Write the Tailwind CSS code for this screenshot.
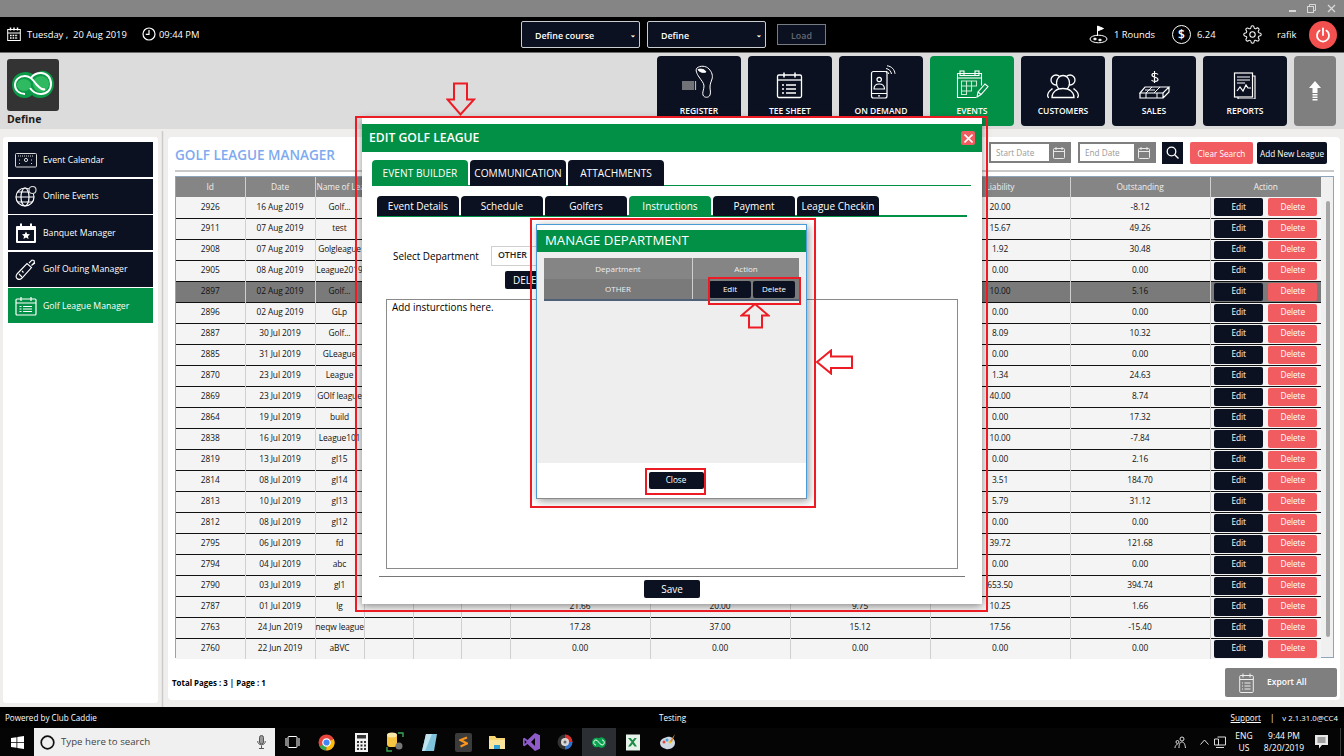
<!doctype html>
<html>
  <head>
    <meta charset="utf-8" />
    <script src="https://cdn.jsdelivr.net/npm/@tailwindcss/browser@4"></script>
  </head>
  <body class="bg-black">
    <div class="relative w-[1344px] h-[756px] overflow-hidden flex flex-col font-['Open_Sans',sans-serif] text-black">
      <!-- window title bar -->
      <div class="h-[17px] bg-[#858585] flex items-center justify-end gap-[11px] pr-[8px] shrink-0">
        <div class="w-[7px] h-[2px] bg-[#d8d8d8] mt-[4px]"></div>
        <svg class="w-[9px] h-[9px]" viewBox="0 0 9 9" fill="none" stroke="#d8d8d8"><rect x="0.5" y="2.5" width="6" height="6" /><path d="M2.5 2.5v-2h6v6h-2" /></svg>
        <svg class="w-[9px] h-[9px]" viewBox="0 0 9 9" fill="none" stroke="#d8d8d8" stroke-width="1.3"><path d="M1 1l7 7M8 1l-7 7" /></svg>
      </div>

      <!-- top black header -->
      <div class="h-[36px] bg-black border-b border-[#6b6b6b] flex items-center text-white text-[9.4px] shrink-0">
        <div class="w-[521px] flex items-center pl-[7px]">
          <svg class="w-[14px] h-[14px]" viewBox="0 0 14 14" fill="none" stroke="#fff"><rect x="0.7" y="2.5" width="12.6" height="11" /><path d="M0.7 6h12.6" /><path d="M3.5 0.5v3M7 0.5v3M10.5 0.5v3" stroke-width="1.5" /><path d="M3 8.5h8M3 11h8" stroke-width="1.4" stroke-dasharray="1.6 1" /></svg>
          <span class="ml-[6px] w-[115px] whitespace-pre pt-[2px]">Tuesday ,  20 Aug 2019</span>
          <svg class="w-[14px] h-[14px]" viewBox="0 0 14 14" fill="none" stroke="#fff" stroke-width="1.2"><circle cx="7" cy="7" r="6" /><path d="M7 3v4.3H3.8" /></svg>
          <span class="ml-[3px] pt-[2px]">09:44 PM</span>
        </div>
        <div class="w-[119px] h-[27px] bg-[#0b1120] border border-[#c9ccd1] rounded-[2px] flex items-center pl-[13px] pt-[2px] text-[8.9px] font-semibold relative">Define course<span class="absolute right-[3px] top-[8px] text-[7px]">⌄</span></div>
        <div class="ml-[7px] w-[119px] h-[27px] bg-[#0b1120] border border-[#c9ccd1] rounded-[2px] flex items-center pl-[13px] pt-[2px] text-[8.9px] font-semibold relative">Define<span class="absolute right-[3px] top-[8px] text-[7px]">⌄</span></div>
        <div class="ml-[11px] w-[49px] h-[21px] bg-[#0b1120] border border-[#777b82] flex items-center justify-center pt-[2px] text-[8.9px] font-semibold text-[#666a70]">Load</div>
        <div class="ml-auto flex items-center">
          <svg class="w-[19px] h-[19px]" viewBox="0 0 19 19" fill="none" stroke="#fff"><path d="M8.5 11V1l6 2.5-6 2.5" fill="#fff" /><ellipse cx="9.5" cy="14" rx="8.5" ry="3.8" /><ellipse cx="6" cy="14" rx="1.4" ry="0.8" fill="#fff" /><ellipse cx="11" cy="15" rx="1.4" ry="0.8" fill="#fff" /></svg>
          <span class="ml-[6px] w-[40px] whitespace-nowrap pt-[2px]">1 Rounds</span>
          <div class="ml-[18px] w-[19px] h-[19px] rounded-full border-[1.300px] border-white flex items-center justify-center text-[12px] leading-none font-semibold">$</div>
          <span class="ml-[6px] w-[18px] pt-[2px]">6.24</span>
          <svg class="ml-[28px] w-[19px] h-[19px]" viewBox="0 0 24 24" fill="none" stroke="#fff" stroke-width="1.3"><circle cx="12" cy="12" r="3.4" /><path d="M19.4 15a1.65 1.65 0 0 0 .33 1.82l.06.06a2 2 0 0 1 0 2.83 2 2 0 0 1-2.83 0l-.06-.06a1.65 1.65 0 0 0-1.82-.33 1.65 1.65 0 0 0-1 1.51V21a2 2 0 0 1-2 2 2 2 0 0 1-2-2v-.09A1.65 1.65 0 0 0 9 19.4a1.65 1.65 0 0 0-1.82.33l-.06.06a2 2 0 0 1-2.83 0 2 2 0 0 1 0-2.83l.06-.06a1.65 1.65 0 0 0 .33-1.82 1.65 1.65 0 0 0-1.51-1H3a2 2 0 0 1-2-2 2 2 0 0 1 2-2h.09A1.65 1.65 0 0 0 4.6 9a1.65 1.65 0 0 0-.33-1.82l-.06-.06a2 2 0 0 1 0-2.83 2 2 0 0 1 2.83 0l.06.06a1.65 1.65 0 0 0 1.82.33H9a1.65 1.65 0 0 0 1-1.51V3a2 2 0 0 1 2-2 2 2 0 0 1 2 2v.09a1.65 1.65 0 0 0 1 1.51 1.65 1.65 0 0 0 1.82-.33l.06-.06a2 2 0 0 1 2.83 0 2 2 0 0 1 0 2.83l-.06.06a1.65 1.65 0 0 0-.33 1.82V9a1.65 1.65 0 0 0 1.51 1H21a2 2 0 0 1 2 2 2 2 0 0 1-2 2h-.09a1.65 1.65 0 0 0-1.51 1z" /></svg>
          <span class="ml-[15px] w-[18px] pt-[2px]">rafik</span>
          <div class="ml-[14px] mr-[7px] w-[28px] h-[28px] rounded-full bg-[#f2504f] flex items-center justify-center">
            <svg class="w-[16px] h-[16px]" viewBox="0 0 16 16" fill="none" stroke="#fff" stroke-width="1.8" stroke-linecap="round"><path d="M8 1.5v6.5" /><path d="M4.6 3.6a6 6 0 1 0 6.8 0" /></svg>
          </div>
        </div>
      </div>

      <!-- logo and module tiles -->
      <div class="h-[76px] bg-[#dcdcdc] flex shrink-0">
        <div class="pl-[7px] pt-[6px]">
          <div class="w-[52px] h-[52px] rounded-[3px] bg-[#333333] flex items-center justify-center">
            <svg class="w-[44px] h-[34px]" viewBox="0 0 44 34" fill="none"><path d="M15 4c5 0 7 3 9 3 3-3 6-5 9-4 6 1 10 6 10 13 0 8-6 14-14 14-4 0-6-1-8-3-2 2-4 3-7 3C6 30 1 24 1 17 1 9 7 4 15 4z" fill="#0a9a48" /><circle cx="30" cy="16" r="8" fill="#2fba62" /><ellipse cx="13" cy="17" rx="7" ry="6" fill="#2fba62" /><path d="M14 26c-6 0-10-4-10-9s4-9 10-9c6 0 9 5 11 8l3 3c2 2 4 3 6 2" stroke="#fff" stroke-width="2" /><path d="M20 10c2-3 6-5 10-5 6 0 10 5 10 11s-4 10-10 10c-6 0-9-3-11-6" stroke="#fff" stroke-width="2" /></svg>
          </div>
          <div class="text-[10.5px] leading-[14px] font-bold text-[#1a1a1a] mt-[1px]">Define</div>
        </div>
        <div class="ml-auto flex gap-[7px] pt-[3px] pr-[8px] text-white text-[8.5px] font-semibold">
          <div class="w-[84px] h-[70px] rounded-[4px] bg-[#0b1120] flex flex-col items-center">
            <svg class="w-[40px] h-[34px] mt-[9px]" viewBox="0 0 40 34" fill="none" stroke="#fff"><path d="M4 16v9M6 16v9M8 16v9M10 16v9M12 16v9M14 16v9M16.500 16v9" stroke="#b5b5b5" stroke-width="1.2" /><path d="M18 3c3-2.500 9-2.500 12 1 3 3 4 7 3 10-1 3-2 5-2 8 0 3 1 5 0 8-1 3-6 3-7 0-1-2 1-6 1-9 0-3-3-6-5-9-2-3-4-7-2-9z" /><path d="M19 4.500c3-1 7 0 8 2.500-3 1-7 0-8-2.500z" fill="#fff" /></svg>
            <span class="mt-[6px] leading-[12px]">REGISTER</span>
          </div>
          <div class="w-[84px] h-[70px] rounded-[4px] bg-[#0b1120] flex flex-col items-center">
            <svg class="w-[40px] h-[34px] mt-[9px]" viewBox="0 0 40 34" fill="none" stroke="#fff" stroke-width="1.3"><rect x="7.500" y="10" width="24" height="22.500" rx="1.500" /><path d="M7.500 15h24" /><path d="M14 7.500v5M25 7.500v5" stroke-width="1.500" /><path d="M16 20h10M16 24h10M16 28h10M12 20h2M12 24h2M12 28h2" stroke-width="1.500" /></svg>
            <span class="mt-[6px] leading-[12px]">TEE SHEET</span>
          </div>
          <div class="w-[84px] h-[70px] rounded-[4px] bg-[#0b1120] flex flex-col items-center">
            <svg class="w-[40px] h-[34px] mt-[9px]" viewBox="0 0 40 34" fill="none" stroke="#fff" stroke-width="1.200"><rect x="10.500" y="6.500" width="15.500" height="26.500" rx="2" /><path d="M10.500 28.500h15.500M17 30.800h2" /><circle cx="18.200" cy="14.500" r="2.200" /><path d="M13 24c0-3 2-5 5.200-5s5.300 2 5.300 5z" /><path d="M25 3.500c3 .5 5 2.500 5.500 5.500M26 0.800c4.500 .5 7.500 3.500 8 8M25 6.300c1.500 .3 2.500 1.200 2.800 2.700" stroke-width="1" /></svg>
            <span class="mt-[6px] leading-[12px]">ON DEMAND</span>
          </div>
          <div class="w-[84px] h-[70px] rounded-[4px] bg-[#029047] flex flex-col items-center">
            <svg class="w-[40px] h-[34px] mt-[9px]" viewBox="0 0 40 34" fill="none" stroke="#fff" stroke-width="1.100"><path d="M24 32.500H5.500V8.500h24v12" /><path d="M5.500 13h24" /><rect x="8" y="6" width="4" height="4.500" /><rect x="23" y="6" width="4" height="4.500" /><path d="M12 10.500h11" /><path d="M9.500 16h15v5h-5v5h-5v3.500h-5zM9.500 21h10M9.500 26h5M14.500 16v13M19.500 16v10" stroke="#c6ecd4" /><path d="M25 32l1-5 7-8 3 2.500-7 8z" /><path d="M26 27l3 2.500" /></svg>
            <span class="mt-[6px] leading-[12px]">EVENTS</span>
          </div>
          <div class="w-[84px] h-[70px] rounded-[4px] bg-[#0b1120] flex flex-col items-center">
            <svg class="w-[40px] h-[34px] mt-[9px]" viewBox="0 0 40 34" fill="none" stroke="#fff" stroke-width="1.300"><circle cx="13" cy="15" r="5" /><circle cx="27" cy="15" r="5" /><path d="M6 32.500c-2 0-1.500-3-.5-5 1-2 3-3 4-4M34 32.500c2 0 1.500-3 .5-5-1-2-3-3-4-4" /><ellipse cx="20" cy="18" rx="6.500" ry="7.500" fill="#0b1120" /><path d="M9 32.500c0-5 4-9 11-9s11 4 11 9z" fill="#0b1120" /></svg>
            <span class="mt-[6px] leading-[12px]">CUSTOMERS</span>
          </div>
          <div class="w-[84px] h-[70px] rounded-[4px] bg-[#0b1120] flex flex-col items-center">
            <svg class="w-[40px] h-[34px] mt-[9px]" viewBox="0 0 40 34" fill="none" stroke="#fff" stroke-width="1.200"><path d="M24 9.500c-1-1.500-6-2-6 .5 0 3 6 1.500 6 4.500 0 2.500-5 2.500-6.500 .5M20.500 6v12" /><path d="M11 22h24l-6 6H6zM6 28v5h23v-5M29 33l6-6v-5" /><path d="M11 25h10M18 22l-6 6M26 22l-6 6M12 28v5M23 28v5" stroke-width="1" /></svg>
            <span class="mt-[6px] leading-[12px]">SALES</span>
          </div>
          <div class="w-[84px] h-[70px] rounded-[4px] bg-[#0b1120] flex flex-col items-center">
            <svg class="w-[40px] h-[34px] mt-[9px]" viewBox="0 0 40 34" fill="none" stroke="#fff" stroke-width="1.200"><rect x="9.500" y="8" width="18" height="24" /><path d="M27.500 11h2.500v23H13v-2" /><path d="M12 12h13M12 15h13M12 18h8" stroke-width="1" /><path d="M12 26l3-4 3 4 3-6 2 3h3" /></svg>
            <span class="mt-[6px] leading-[12px]">REPORTS</span>
          </div>
          <div class="w-[42px] h-[70px] rounded-[4px] bg-[#7f7f7f] flex items-center justify-center">
            <svg class="w-[12px] h-[20px]" viewBox="0 0 12 20" fill="#fff"><path d="M6 0l6 7H8.500v5h-5V7H0z" /><path d="M3.500 13h5v1.500h-5zM3.500 15.500h5V17h-5zM3.500 18h5v1.500h-5z" /></svg>
          </div>
        </div>
      </div>

      <!-- content -->
      <div class="h-[578px] bg-[#efeeec] flex shrink-0">
        <div class="ml-[3px] mt-[8px] mb-[4px] w-[155px] bg-white rounded-[3px] px-[5px] pt-[5px] flex flex-col gap-[1.500px] text-white text-[8.700px] font-medium shrink-0">
          <div class="h-[35px] bg-[#0b1120] flex items-center pl-[7px]">
            <svg class="w-[22px] h-[16px] mr-[6px]" viewBox="0 0 22 16" fill="none" stroke="#d8d8d8"><rect x="0.500" y="1.500" width="21" height="13.500" rx="1" /><path d="M3 4h16M4 8h2M9 8h1M16 8h2M4 11.500h2M16 11.500h2" stroke-dasharray="1 1" /><circle cx="11" cy="8" r="1.600" /></svg>
            <span class="pt-[2px]">Event Calendar</span>
          </div>
          <div class="h-[35px] bg-[#0b1120] flex items-center pl-[7px]">
            <svg class="w-[22px] h-[21px] mr-[6px]" viewBox="0 0 22 21" fill="none" stroke="#fff" stroke-width="1.200"><circle cx="10" cy="11" r="9" /><ellipse cx="10" cy="11" rx="4" ry="9" /><path d="M1 11h18M2.500 6h15M2.500 16h15" /><circle cx="17.500" cy="4" r="3.500" fill="#0b1120" stroke="#d0d0d0" /></svg>
            <span class="pt-[2px]">Online Events</span>
          </div>
          <div class="h-[35px] bg-[#0b1120] flex items-center pl-[7px]">
            <svg class="w-[22px] h-[20px] mr-[6px]" viewBox="0 0 22 20" fill="#fff"><path d="M2 3h18a1 1 0 0 1 1 1v15a1 1 0 0 1-1 1H2a1 1 0 0 1-1-1V4a1 1 0 0 1 1-1zM3 7v11h16V7z" fill-rule="evenodd" /><rect x="5" y="0.500" width="2" height="4" /><rect x="15" y="0.500" width="2" height="4" /><path d="M11 8.500l1.200 2.500 2.800.3-2 1.900.5 2.800-2.500-1.400-2.500 1.400.5-2.800-2-1.900 2.800-.3z" /></svg>
            <span class="pt-[2px]">Banquet Manager</span>
          </div>
          <div class="h-[35px] bg-[#0b1120] flex items-center pl-[7px]">
            <svg class="w-[22px] h-[21px] mr-[6px]" viewBox="0 0 22 21" fill="none" stroke="#fff" stroke-width="1.100"><path d="M2 15L12 4.500l4.500 4L7 19c-2 2-4 1.500-5 .5-1-1-1-3 0-4.500z" /><path d="M4 15l3 3M7 12l1.500 1.500" /><path d="M14 4l3-3 2 .5.500 2-3 3M17 6l3-2" /></svg>
            <span class="pt-[2px]">Golf Outing Manager</span>
          </div>
          <div class="h-[35px] bg-[#029047] flex items-center pl-[7px]">
            <svg class="w-[22px] h-[20px] mr-[6px]" viewBox="0 0 22 20" fill="none" stroke="#fff" stroke-width="1.200"><rect x="1" y="3" width="20" height="16" rx="1" /><path d="M1 7h20M6 1v4M16 1v4" /><path d="M8 10.500h9M8 13h9M8 15.500h9M4.500 10.500h2M4.500 13h2M4.500 15.500h2" /></svg>
            <span class="pt-[2px]">Golf League Manager</span>
          </div>
        </div>
        <div class="ml-[3px] mt-[2px] w-[3px] h-[576px] bg-[#c9c9c9] border-x border-[#e6e6e6] shrink-0"></div>
        <div class="ml-[4px] mt-[8px] mb-[7px] w-[1172px] bg-white rounded-[4px] pl-[7px] pr-[6px] flex flex-col shrink-0">
          <div class="h-[35px] border-b-2 border-[#c9c9c9] flex items-center shrink-0">
            <span class="text-[13.500px] leading-[16px] font-semibold text-[#7eaaf0] mt-[2px]">GOLF LEAGUE MANAGER</span>
            <div class="ml-auto flex items-center pr-[7px] text-[8.200px] mb-[2px]">
              <div class="w-[82px] h-[21px] border-2 border-[#7f7f7f] flex items-center text-[#9a9a9a]">
                <span class="pl-[5px] pt-[2px] flex-1">Start Date</span>
                <div class="w-[20px] h-full bg-[#7f7f7f] flex items-center justify-center"><svg class="w-[12px] h-[12px]" viewBox="0 0 12 12" fill="none" stroke="#e8e8e8"><rect x="0.500" y="1.500" width="11" height="10" rx="1" /><path d="M0.500 4.500h11M3 0v3M9 0v3" /></svg></div>
              </div>
              <div class="ml-[7px] w-[78px] h-[21px] border-2 border-[#7f7f7f] flex items-center text-[#9a9a9a]">
                <span class="pl-[5px] pt-[2px] flex-1">End Date</span>
                <div class="w-[20px] h-full bg-[#7f7f7f] flex items-center justify-center"><svg class="w-[12px] h-[12px]" viewBox="0 0 12 12" fill="none" stroke="#e8e8e8"><rect x="0.500" y="1.500" width="11" height="10" rx="1" /><path d="M0.500 4.500h11M3 0v3M9 0v3" /></svg></div>
              </div>
              <div class="ml-[6px] w-[21px] h-[22px] bg-[#0b1120] flex items-center justify-center"><svg class="w-[13px] h-[13px]" viewBox="0 0 13 13" fill="none" stroke="#fff" stroke-width="1.300"><circle cx="5.500" cy="5.500" r="4.300" /><path d="M8.700 8.700L12.500 12.500" /></svg></div>
              <div class="ml-[7px] w-[63px] h-[22px] pt-[3px] bg-[#f05c5f] rounded-[2px] flex items-center justify-center text-white">Clear Search</div>
              <div class="ml-[4px] w-[70px] h-[22px] pt-[3px] bg-[#0b1120] rounded-[2px] flex items-center justify-center text-white whitespace-nowrap">Add New League</div>
            </div>
          </div>
          <div class="mt-[4px] h-[482px] border border-[#8ea4bb] flex shrink-0">
            <div class="w-[1145px] shrink-0">
              <table class="table-fixed w-[1145px] text-[8.400px] tracking-[-0.1px] text-center text-[#111]">
                <colgroup>
                  <col class="w-[69px]" /><col class="w-[70px]" /><col class="w-[49px]" /><col class="w-[49px]" /><col class="w-[48px]" /><col class="w-[49px]" /><col class="w-[140px]" /><col class="w-[140px]" /><col class="w-[140px]" /><col class="w-[140px]" /><col class="w-[140px]" /><col class="w-[111px]" />
                </colgroup>
                <thead>
                  <tr class="bg-[#858585] text-[#eeeeee] h-[20px]">
                    <th class="font-normal border-r border-[#cfcfcf]">Id</th>
                    <th class="font-normal border-r border-[#cfcfcf]">Date</th>
                    <th class="font-normal border-r border-[#cfcfcf] text-left pl-[1px] whitespace-nowrap">Name of League</th>
                    <th class="border-r border-[#cfcfcf]"></th>
                    <th class="border-r border-[#cfcfcf]"></th>
                    <th class="border-r border-[#cfcfcf]"></th>
                    <th class="border-r border-[#cfcfcf]"></th>
                    <th class="border-r border-[#cfcfcf]"></th>
                    <th class="border-r border-[#cfcfcf]"></th>
                    <th class="font-normal border-r border-[#cfcfcf]">Liability</th>
                    <th class="font-normal border-r border-[#cfcfcf]">Outstanding</th>
                    <th class="font-normal">Action</th>
                  </tr>
                </thead>
                <tbody id="rows"></tbody>
              </table>
            </div>
            <div class="flex-1 bg-[#f0f0f0] relative">
              <div class="absolute left-[5px] top-[24px] bottom-[20px] w-[4px] rounded-full bg-[#a6a6a6]"></div>
            </div>
          </div>
          <div class="flex-1 flex items-center justify-between">
            <span class="text-[7.900px] font-bold -ml-[3px] mt-[10px]">Total Pages : 3 | Page : 1</span>
            <div class="-mr-[3px] mt-[7px] w-[112px] h-[29px] rounded-[2px] bg-[#7f7f7f] flex items-center text-white text-[8.500px] font-semibold">
              <svg class="ml-[14px] w-[15px] h-[20px]" viewBox="0 0 15 20" fill="none" stroke="#eee"><rect x="0.700" y="2.500" width="13.600" height="17" rx="1" /><path d="M0.700 6.500h13.600M4 0.500v4M11 0.500v4M5.500 10h6M5.500 13h6M5.500 16h6M3 10h1M3 13h1M3 16h1" /></svg>
              <span class="ml-[13px]">Export All</span>
            </div>
          </div>
        </div>
      </div>

      <!-- status strip -->
      <div class="h-[21px] pt-[2px] bg-black text-white text-[8.100px] flex items-center shrink-0">
        <span class="ml-[5px] w-[654px]">Powered by Club Caddie</span>
        <span>Testing</span>
        <span class="ml-auto underline">Support</span>
        <span class="ml-[9px]">|</span>
        <span class="ml-[8px] mr-[6px] text-[7.800px]">v 2.1.31.0@CC4</span>
      </div>

      <!-- windows taskbar -->
      <div class="h-[28px] bg-[#050505] flex items-stretch shrink-0 relative">
        <div class="w-[34px] flex items-center justify-center">
          <svg class="w-[13px] h-[13px]" viewBox="0 0 13 13" fill="#fff"><path d="M0 2l5.500-.8V6H0zM6.300 1.100L13 0v6H6.300zM0 6.800h5.500v4.900L0 11zM6.300 6.800H13V13l-6.700-1z" /></svg>
        </div>
        <div class="w-[241px] bg-[#f0f0f0] flex items-center pl-[6px] text-[9.700px] text-[#444]">
          <svg class="w-[15px] h-[15px]" viewBox="0 0 15 15" fill="none" stroke="#111" stroke-width="1.700"><circle cx="7.500" cy="7.500" r="6.300" /></svg>
          <span class="ml-[6px]">Type here to search</span>
          <svg class="ml-auto mr-[9px] w-[9px] h-[14px]" viewBox="0 0 9 14" fill="none" stroke="#555"><rect x="2.500" y="0.500" width="4" height="8.500" rx="2" fill="#999" /><path d="M0.700 6c0 5 7.600 5 7.600 0M4.500 10.500V13M2 13.500h5" /></svg>
        </div>
        <div class="w-[34px] flex items-center justify-center">
          <svg class="w-[15px] h-[12px]" viewBox="0 0 15 12" fill="none" stroke="#fff"><rect x="3" y="0.500" width="9" height="11" rx="1" /><path d="M1 2v8M14 2v8" /></svg>
        </div>
        <div class="w-[35px] flex items-center justify-center">
          <svg class="w-[17px] h-[17px]" viewBox="0 0 17 17"><circle cx="8.500" cy="8.500" r="8" fill="#e8453c" /><path d="M8.500 8.500L1.600 12.500A8 8 0 0 0 8.500 16.500z" fill="#34a853" /><path d="M8.500 8.500L8.500 16.500A8 8 0 0 0 15.800 5z" fill="#fbbc05" /><circle cx="8.500" cy="8.500" r="3.700" fill="#4285f4" stroke="#fff" stroke-width="1.200" /></svg>
        </div>
        <div class="w-[34px] flex items-center justify-center">
          <svg class="w-[13px] h-[19px]" viewBox="0 0 13 19"><rect width="13" height="19" fill="#f2f2f2" /><rect x="2" y="2" width="9" height="3.500" fill="#333" /><path d="M2 8h2v2H2zM5.500 8h2v2h-2zM9 8h2v2H9zM2 11.500h2v2H2zM5.500 11.500h2v2h-2zM9 11.500h2v2H9zM2 15h2v2H2zM5.500 15h2v2h-2zM9 15h2v2H9z" fill="#333" /></svg>
        </div>
        <div class="w-[34px] flex items-center justify-center">
          <svg class="w-[18px] h-[20px]" viewBox="0 0 18 20"><rect x="1" y="1" width="10" height="14" rx="3" fill="#f5c542" /><ellipse cx="6" cy="3" rx="5" ry="2.500" fill="#f9e7a8" /><path d="M12 1h5v4M1 15v4h5" fill="none" stroke="#3aa655" stroke-width="1.400" /><circle cx="13" cy="14" r="3.500" fill="#777" /></svg>
        </div>
        <div class="w-[34px] flex items-center justify-center">
          <svg class="w-[15px] h-[19px]" viewBox="0 0 15 19"><path d="M4 1h11l-3 17H0z" fill="#7fc4dc" /><path d="M4 1h6L3 18H0z" fill="#bfe4ef" /></svg>
        </div>
        <div class="w-[34px] flex items-center justify-center">
          <div class="w-[17px] h-[19px] bg-[#3b3b3b] rounded-[2px] flex items-center justify-center">
            <svg class="w-[9px] h-[12px]" viewBox="0 0 9 12" fill="none" stroke="#f7941e" stroke-width="2.200"><path d="M8 1.500L1.500 4 8 7.500 1.500 10.500" /></svg>
          </div>
        </div>
        <div class="w-[34px] flex items-center justify-center">
          <svg class="w-[16px] h-[14px]" viewBox="0 0 16 14"><path d="M0 1h6l1.500 2H16v11H0z" fill="#f7d774" /><rect x="0" y="5" width="16" height="9" fill="#fbe59c" /><rect x="5" y="10" width="6" height="4" fill="#2f9fd8" /></svg>
        </div>
        <div class="w-[34px] flex items-center justify-center">
          <svg class="w-[17px] h-[18px]" viewBox="0 0 17 18" fill="#8e5bc9"><path d="M12 0l5 2.200v13.600L12 18 4.500 11 1.500 13.300 0 12.500V5.500l1.500-.8 3 2.300zM12 5l-4 4 4 4zM1.700 7v4l2-2z" fill-rule="evenodd" /></svg>
        </div>
        <div class="w-[34px] flex items-center justify-center">
          <svg class="w-[16px] h-[16px]" viewBox="0 0 16 16"><circle cx="8" cy="8" r="7.500" fill="#333" /><path d="M8 .5A7.500 7.500 0 0 1 15.500 8H8z" fill="#d7322e" /><path d="M15.500 8A7.500 7.500 0 0 1 8 15.500V8z" fill="#2f6fd0" /><circle cx="8" cy="8" r="4" fill="#d8d8d8" /><circle cx="8" cy="8" r="1.500" fill="#666" /></svg>
        </div>
        <div class="w-[34px] bg-[#2b2f33] flex items-center justify-center">
          <svg class="w-[14px] h-[11px]" viewBox="0 0 14 11" fill="#0aa350"><ellipse cx="4.500" cy="5.500" rx="4.500" ry="4.800" /><ellipse cx="9.500" cy="5.500" rx="4.500" ry="5.200" /><path d="M4 8c-3 0-3-5 0-5 2 0 3 4 6 5 3 0 3-5 0-5" fill="none" stroke="#fff" /></svg>
        </div>
        <div class="w-[34px] flex items-center justify-center">
          <svg class="w-[16px] h-[17px]" viewBox="0 0 16 17"><rect x="1" y="0.500" width="14" height="16" fill="#e7f3ea" /><path d="M3 4l3.500 4L3 12.500h2.500L7.600 10l2 2.500H12L8.800 8l3-4H9.500L7.600 6.300 5.700 4z" fill="#1e8c47" /></svg>
        </div>
        <div class="w-[34px] flex items-center justify-center">
          <svg class="w-[17px] h-[17px]" viewBox="0 0 17 17"><path d="M8 3c4-1 8 2 8 6s-5 7-9 6-6-3-6-6 3-5 7-6z" fill="#cfd7e2" /><circle cx="5" cy="8" r="1.500" fill="#e24b3b" /><circle cx="8" cy="6" r="1.500" fill="#4aa3df" /><circle cx="11" cy="8" r="1.500" fill="#f2c230" /><path d="M16 0l-5 7 2 1z" fill="#d28a3a" /></svg>
        </div>

        <!-- tray -->
        <div class="ml-auto flex items-center text-white text-[8.500px] leading-[12px]">
          <svg class="w-[13px] h-[13px]" viewBox="0 0 13 13" fill="none" stroke="#ddd"><circle cx="8" cy="3" r="2" /><path d="M5 12c0-4 1-6 3-6s3 2 3.500 6" /><circle cx="3.500" cy="6" r="1.500" /><path d="M1 12c0-2 1-3.500 2.500-3.500" /></svg>
          <svg class="ml-[13px] w-[9px] h-[6px]" viewBox="0 0 9 6" fill="none" stroke="#ddd"><path d="M0.500 5.500l4-4.500 4 4.500" /></svg>
          <svg class="ml-[5px] w-[12px] h-[12px]" viewBox="0 0 12 12" fill="none" stroke="#ddd"><path d="M3.500 1H11.500V9H3.500M0.500 3h4v6h-4zM2 11.500h8" /></svg>
          <div class="ml-[8px] w-[20px] text-center">ENG<br />US</div>
          <div class="ml-[6px] w-[48px] text-center">9:44 PM<br />8/20/2019</div>
          <svg class="ml-[7px] w-[13px] h-[14px]" viewBox="0 0 13 14" fill="#e8e8e8"><path d="M0 0h13v10H7l-3 3.500V10H0z" /><path d="M2.500 3h8M2.500 5h8M2.500 7h8" stroke="#333" stroke-width="0.800" /></svg>
          <div class="ml-[12px] w-[1px] h-full bg-[#3a3a3a] mr-[3px]"></div>
        </div>
      </div>

      <!-- edit golf league dialog -->
      <div class="absolute left-[362px] top-[118px] w-[620px] h-[486px] bg-white shadow-[0_2px_8px_rgba(0,0,0,0.45)] flex flex-col">
        <div class="mt-[6px] h-[28px] bg-[#029047] flex items-center justify-between pl-[7px] pr-[7px] text-white shrink-0">
          <span class="text-[12.200px] font-semibold pt-[1px]">EDIT GOLF LEAGUE</span>
          <div class="w-[14px] h-[14px] rounded-[2px] bg-[#f05c5f] flex items-center justify-center">
            <svg class="w-[9px] h-[9px]" viewBox="0 0 9 9" fill="none" stroke="#fff" stroke-width="1.600"><path d="M0.500 0.500l8 8M8.500 0.500l-8 8" /></svg>
          </div>
        </div>
        <div class="ml-[10px] w-[599px] mt-[8px] h-[26px] flex gap-[2px] border-b border-[#029047] text-white text-[10.200px] shrink-0">
          <div class="w-[96px] h-[26px] pt-[2px] bg-[#029047] rounded-t-[4px] flex items-center justify-center">EVENT BUILDER</div>
          <div class="w-[96px] h-[26px] pt-[2px] bg-[#0b1120] rounded-t-[4px] flex items-center justify-center">COMMUNICATION</div>
          <div class="w-[96px] h-[26px] pt-[2px] bg-[#0b1120] rounded-t-[4px] flex items-center justify-center">ATTACHMENTS</div>
        </div>
        <div class="ml-[15px] w-[590px] mt-[10px] h-[21px] flex gap-[2px] border-b-2 border-[#029047] text-white text-[10px] shrink-0">
          <div class="w-[82px] h-[20px] pt-[1px] bg-[#0b1120] rounded-t-[4px] flex items-center justify-center">Event Details</div>
          <div class="w-[82px] h-[20px] pt-[1px] bg-[#0b1120] rounded-t-[4px] flex items-center justify-center">Schedule</div>
          <div class="w-[82px] h-[20px] pt-[1px] bg-[#0b1120] rounded-t-[4px] flex items-center justify-center">Golfers</div>
          <div class="w-[82px] h-[20px] pt-[1px] bg-[#029047] rounded-t-[4px] flex items-center justify-center">Instructions</div>
          <div class="w-[82px] h-[20px] pt-[1px] bg-[#0b1120] rounded-t-[4px] flex items-center justify-center">Payment</div>
          <div class="w-[82px] h-[20px] pt-[1px] bg-[#0b1120] rounded-t-[4px] flex items-center justify-center whitespace-nowrap">League Checkin</div>
        </div>
        <div class="ml-[31px] mt-[29px] h-[20px] flex items-center text-[9.900px] shrink-0">
          <span>Select Department</span>
          <div class="ml-[12px] w-[100px] h-[20px] border border-[#cfcfcf] flex items-center pl-[6px] text-[8.800px] font-semibold text-[#222]">OTHER</div>
        </div>
        <div class="ml-[143px] mt-[5px] w-[60px] h-[18px] bg-[#0b1120] rounded-[2px] flex items-center pl-[8px] text-white text-[10px] shrink-0">DELETE</div>
        <div class="ml-[24px] mt-[10px] w-[572px] h-[270px] border border-[#8a8a8a] pl-[5px] text-[9.900px] shrink-0">Add insturctions here.</div>
        <div class="ml-[17px] mt-[7px] w-[586px] border-t border-[#777] shrink-0"></div>
        <div class="mt-[3px] ml-[282px] w-[56px] h-[18px] bg-[#0b1120] rounded-[2px] flex items-center justify-center text-white text-[10px] shrink-0">Save</div>
      </div>

      <!-- manage department dialog -->
      <div class="absolute left-[536px] top-[224px] w-[271px] h-[275px] bg-white border border-[#4a9bd8] border-b-[#8a8a8a] shadow-[2px_2px_8px_rgba(0,0,0,0.4)] flex flex-col">
        <div class="mt-[5px] h-[22px] bg-[#029047] flex items-center pl-[8px] text-white text-[13.200px] shrink-0">MANAGE DEPARTMENT</div>
        <div class="h-[211px] bg-[#eeeeee] pt-[6px] pl-[7px] shrink-0">
          <div class="w-[255px] border-b-2 border-[#4f6275] text-[8px] text-[#eee]">
            <div class="h-[21px] bg-[#858585] flex items-center">
              <div class="w-[149px] h-full flex items-center justify-center border-r border-[#cfcfcf]">Department</div>
              <div class="flex-1 flex items-center justify-center">Action</div>
            </div>
            <div class="h-[20px] bg-[#7a7a7a] flex items-center">
              <div class="w-[149px] h-full flex items-center justify-center border-r border-[#cfcfcf]">OTHER</div>
              <div class="flex-1 flex items-center gap-[2px] pl-[16px] text-white">
                <div class="w-[42px] h-[17px] bg-[#0b1120] rounded-[2px] flex items-center justify-center">Edit</div>
                <div class="w-[42px] h-[17px] bg-[#0b1120] rounded-[2px] flex items-center justify-center">Delete</div>
              </div>
            </div>
          </div>
        </div>
        <div class="flex-1 flex items-center justify-center">
          <div class="ml-[9px] w-[55px] h-[17px] bg-[#0b1120] rounded-[2px] flex items-center justify-center text-white text-[8.200px]">Close</div>
        </div>
      </div>

      <!-- red annotations -->
      <div class="absolute left-[355px] top-[116px] w-[633px] h-[496px] border-2 border-[#ed1c24]"></div>
      <div class="absolute left-[530px] top-[218px] w-[286px] h-[290px] border-2 border-[#ed1c24]"></div>
      <div class="absolute left-[708px] top-[277px] w-[93px] h-[28px] border-2 border-[#ed1c24]"></div>
      <div class="absolute left-[645px] top-[468px] w-[61px] h-[27px] border-2 border-[#ed1c24]"></div>
      <svg class="absolute left-[446px] top-[82px] w-[30px] h-[34px]" viewBox="0 0 30 34" fill="none" stroke="#ed1c24" stroke-width="2"><path d="M8 1.500h13v16h7L14.500 32.500 1.500 17.500h6.500z" /></svg>
      <svg class="absolute left-[740px] top-[303px] w-[30px] h-[26px]" viewBox="0 0 30 26" fill="none" stroke="#ed1c24" stroke-width="2"><path d="M15 1L28.500 12.500H22V24.500H9V12.500H1.500z" /></svg>
      <svg class="absolute left-[816px] top-[349px] w-[37px] h-[26px]" viewBox="0 0 37 26" fill="none" stroke="#ed1c24" stroke-width="2"><path d="M1 13L15 1.500V7.500H36V19H15V24.500z" /></svg>
    </div>

    <script>
      const rows = [
        ['2926', '16 Aug 2019', 'Golf...', '', '', '', '20.00', '-8.12'],
        ['2911', '07 Aug 2019', 'test', '', '', '', '15.67', '49.26'],
        ['2908', '07 Aug 2019', 'Golgleague', '', '', '', '1.92', '30.48'],
        ['2905', '08 Aug 2019', 'League2019', '', '', '', '0.00', '0.00'],
        ['2897', '02 Aug 2019', 'Golf...', '', '', '', '10.00', '5.16'],
        ['2896', '02 Aug 2019', 'GLp', '', '', '', '0.00', '0.00'],
        ['2887', '30 Jul 2019', 'Golf...', '', '', '', '8.09', '10.32'],
        ['2885', '31 Jul 2019', 'GLeague', '', '', '', '0.00', '0.00'],
        ['2870', '23 Jul 2019', 'League', '', '', '', '1.34', '24.63'],
        ['2869', '23 Jul 2019', 'GOlf league', '', '', '', '40.00', '8.74'],
        ['2864', '19 Jul 2019', 'build', '', '', '', '0.00', '17.32'],
        ['2838', '16 Jul 2019', 'League101', '', '', '', '10.00', '-7.84'],
        ['2819', '13 Jul 2019', 'gl15', '', '', '', '0.00', '2.16'],
        ['2814', '08 Jul 2019', 'gl14', '', '', '', '3.51', '184.70'],
        ['2813', '10 Jul 2019', 'gl13', '', '', '', '5.79', '31.12'],
        ['2812', '08 Jul 2019', 'gl12', '', '', '', '0.00', '0.00'],
        ['2795', '06 Jul 2019', 'fd', '', '', '', '39.72', '121.68'],
        ['2794', '04 Jul 2019', 'abc', '', '', '', '0.00', '0.00'],
        ['2790', '03 Jul 2019', 'gl1', '', '', '', '653.50', '394.74'],
        ['2787', '01 Jul 2019', 'lg', '21.66', '20.00', '9.75', '10.25', '1.66'],
        ['2763', '24 Jun 2019', 'neqw league', '17.28', '37.00', '15.12', '17.56', '-15.40'],
        ['2760', '22 Jun 2019', 'aBVC', '0.00', '0.00', '0.00', '0.00', '0.00']
      ]

      let html = ''
      rows.forEach((r, i) => {
        const rowClass = i === 4 ? 'bg-[#7a7a7a]' : 'bg-[#f4f4f4]'
        const lineClass = i === rows.length - 1 ? '' : 'border-b border-[#111]'
        const cell = 'border-r border-[#cfcfcf] whitespace-nowrap'
        html += `
          <tr class="${rowClass} ${lineClass} h-[21px]">
            <td class="${cell}">${r[0]}</td>
            <td class="${cell}">${r[1]}</td>
            <td class="${cell}">${r[2]}</td>
            <td class="${cell}"></td>
            <td class="${cell}"></td>
            <td class="${cell}"></td>
            <td class="${cell}">${r[3]}</td>
            <td class="${cell}">${r[4]}</td>
            <td class="${cell}">${r[5]}</td>
            <td class="${cell}">${r[6]}</td>
            <td class="${cell}">${r[7]}</td>
            <td>
              <div class="flex justify-center gap-[5px] text-white">
                <div class="w-[49px] h-[18px] bg-[#0b1120] rounded-[2px] flex items-center justify-center">Edit</div>
                <div class="w-[49px] h-[18px] bg-[#f05c5f] rounded-[2px] flex items-center justify-center">Delete</div>
              </div>
            </td>
          </tr>
        `
      })
      document.querySelector('#rows').innerHTML = html
    </script>
  </body>
</html>
